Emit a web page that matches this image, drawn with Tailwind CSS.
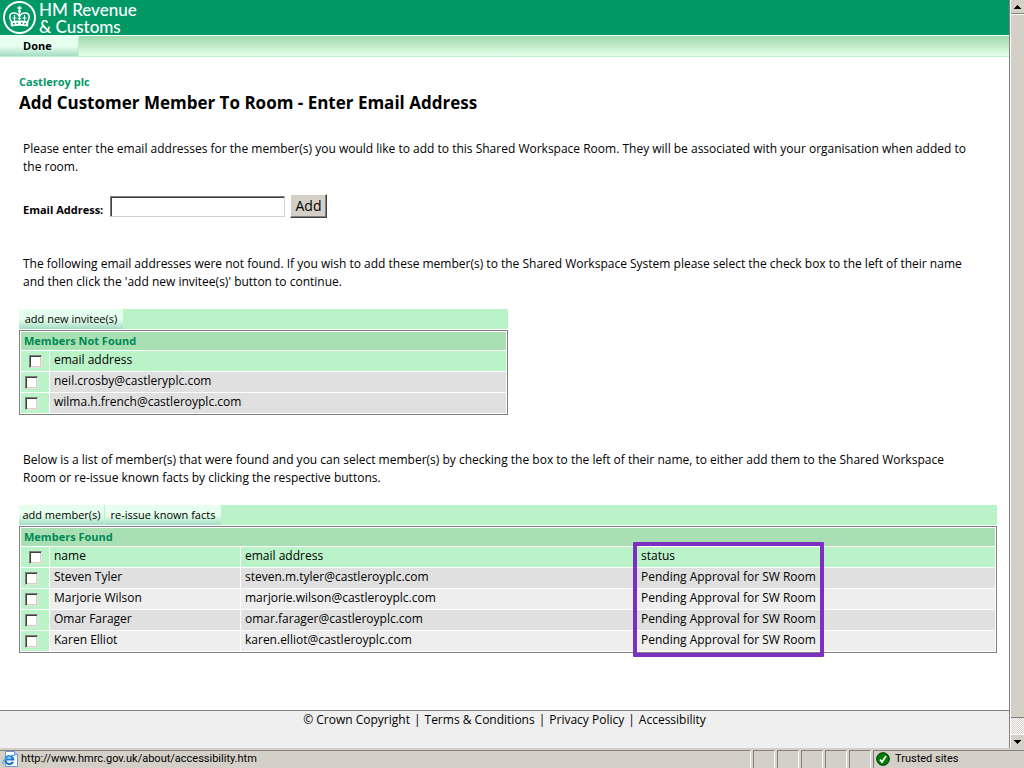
<!DOCTYPE html>
<html lang="en">
<head>
    <meta charset="UTF-8">
    <meta name="viewport" content="width=device-width, initial-scale=1.0">
    <script src="https://cdn.jsdelivr.net/npm/@tailwindcss/browser@4"></script>
    <title>Add Customer Member To Room</title>
</head>
<body class="flex flex-col h-screen bg-white text-black text-[12px] leading-[18px] font-['Open_Sans',sans-serif]">
    <div class="flex flex-1 min-h-0">
        <div class="flex flex-col flex-1 min-w-0 border-r border-[#808080]">
            <!-- Header -->
            <header class="flex items-center gap-[3px] h-[35px] pl-[3px] bg-[#009966] text-white shrink-0">
                <svg class="w-[33px] h-[33px]" viewBox="0 0 33 33" fill="none" stroke="#fff">
                    <circle cx="16.5" cy="16.5" r="15.5" stroke-width="1.9"/>
                    <path d="M16.500 5v5M14.300 7h4.400" stroke-width="1.5"/>
                    <circle cx="16.5" cy="10.5" r="1.4" fill="#fff" stroke="none"/>
                    <path d="M8.500 20.500C6 17.500 6 12 10.500 12C14 12 16 13.500 16.500 16C17 13.500 19 12 22.500 12C27 12 27 17.500 24.500 20.500" stroke-width="1.5"/>
                    <path d="M16.500 11v8.500M11.500 14v6M21.500 14v6" stroke-width="1.2"/>
                    <path d="M9.500 17h4M19.500 17h4M14.700 17.500h3.600" stroke-width="1.2"/>
                    <path d="M7.500 20.500Q16.500 18.500 25.500 20.500L25 25.500Q16.500 24 8 25.500Z" fill="#fff" stroke="none"/>
                    <path d="M10 22.800h1.700M13.500 22.300h1.500M18 22.300h1.500M21.300 22.800h1.700" stroke="#009966" stroke-width="1.4"/>
                </svg>
                <div class="text-[17px] leading-[17px] font-medium font-['Lato',sans-serif]">HM Revenue<br>&amp; Customs</div>
            </header>
            <nav class="flex h-[22px] border-t border-t-white border-b border-b-[#bbf3c9] bg-linear-to-b from-[#a0d8ac] to-[#e4ffea] shrink-0">
                <a href="#" class="w-[79px] pl-[23px] text-[11px] leading-[20px] font-bold border-r border-[#bbf3c9] bg-linear-to-b from-[#e6ffee] from-50% to-[#a4dcc4]">Done</a>
            </nav>

            <main class="flex-1 pl-[19px] pr-3 pt-4">
                <p class="text-[11px] text-[#009966] font-bold">Castleroy plc</p>
                <h1 class="text-[17px] leading-6 font-bold">Add Customer Member To Room - Enter Email Address</h1>

                <p class="mt-[25px] pl-1 pr-6">Please enter the email addresses for the member(s) you would like to add to this Shared Workspace Room. They will be associated with your organisation when added to the room.</p>

                <form class="flex items-start gap-[5px] mt-[18px] pl-1">
                    <label for="email" class="w-[82px] pt-[7px] text-[11px] font-bold whitespace-nowrap">Email Address:</label>
                    <input id="email" type="text" class="w-[175px] h-[21px] mt-[2px] px-1 bg-white border border-t-[#808080] border-l-[#808080] border-b-[#d4d0c8] border-r-[#d4d0c8] shadow-[inset_1px_1px_0_#404040]">
                    <button type="button" class="w-[37px] h-6 bg-[#d4d0c8] text-[14px] leading-5 border border-t-white border-l-white border-b-[#404040] border-r-[#404040] shadow-[inset_-1px_-1px_0_#808080]">Add</button>
                </form>

                <p class="mt-9 pl-1 pr-6">The following email addresses were not found. If you wish to add these member(s) to the Shared Workspace System please select the check box to the left of their name and then click the 'add new invitee(s)' button to continue.</p>

                <!-- Members not found -->
                <section class="w-1/2 mt-[18px]">
                    <div class="flex gap-px h-5 mb-px bg-[#bbf3c9] text-[11px]">
                        <button type="button" class="w-[104px] whitespace-nowrap bg-linear-to-b from-[#e6ffee] from-50% to-[#a4dcc4]">add new invitee(s)</button>
                    </div>
                    <table class="w-full table-fixed border-separate border-spacing-px border border-[#808080] text-left">
                        <colgroup><col class="w-7"><col></colgroup>
                        <thead>
                            <tr class="h-[18px] bg-[#a8e0b4]"><th colspan="2" class="px-[3px] text-[11px] text-[#008855] font-bold">Members Not Found</th></tr>
                            <tr class="h-5 bg-[#bbf3c9]">
                                <td class="pl-2"><input type="checkbox" aria-label="Select all" class="block appearance-none size-[13px] bg-white border border-t-[#808080] border-l-[#808080] border-b-[#e8e4dc] border-r-[#e8e4dc] shadow-[inset_1px_1px_0_#404040,inset_-1px_-1px_0_#d4d0c8]"></td>
                                <th class="pl-1 pb-[2px] font-normal">email address</th>
                            </tr>
                        </thead>
                        <tbody>
                            <tr class="h-5 bg-[#e0e0e0]">
                                <td class="pl-1 bg-[#bbf3c9]"><input type="checkbox" aria-label="neil.crosby" class="block appearance-none size-[13px] bg-white border border-t-[#808080] border-l-[#808080] border-b-[#e8e4dc] border-r-[#e8e4dc] shadow-[inset_1px_1px_0_#404040,inset_-1px_-1px_0_#d4d0c8]"></td>
                                <td class="pl-1 pb-[2px]">neil.crosby@castleryplc.com</td>
                            </tr>
                            <tr class="h-5 bg-[#e0e0e0]">
                                <td class="pl-1 bg-[#bbf3c9]"><input type="checkbox" aria-label="wilma.h.french" class="block appearance-none size-[13px] bg-white border border-t-[#808080] border-l-[#808080] border-b-[#e8e4dc] border-r-[#e8e4dc] shadow-[inset_1px_1px_0_#404040,inset_-1px_-1px_0_#d4d0c8]"></td>
                                <td class="pl-1 pb-[2px]">wilma.h.french@castleroyplc.com</td>
                            </tr>
                        </tbody>
                    </table>
                </section>

                <p class="mt-9 pl-1 pr-6">Below is a list of member(s) that were found and you can select member(s) by checking the box to the left of their name, to either add them to the Shared Workspace Room or re-issue known facts by clicking the respective buttons.</p>

                <!-- Members found -->
                <section class="mt-[18px]">
                    <div class="flex gap-px h-5 mb-px bg-[#bbf3c9] text-[11px]">
                        <button type="button" class="w-[85px] whitespace-nowrap bg-linear-to-b from-[#e6ffee] from-50% to-[#a4dcc4]">add member(s)</button>
                        <button type="button" class="w-[116px] whitespace-nowrap bg-linear-to-b from-[#e6ffee] from-50% to-[#a4dcc4]">re-issue known facts</button>
                    </div>
                    <div class="relative">
                        <table class="w-full table-fixed border-separate border-spacing-px border border-[#808080] text-left">
                            <colgroup><col class="w-7"><col class="w-[190px]"><col class="w-[395px]"><col></colgroup>
                            <thead>
                                <tr class="h-[18px] bg-[#a8e0b4]"><th colspan="4" class="px-[3px] text-[11px] text-[#008855] font-bold">Members Found</th></tr>
                                <tr class="h-5 bg-[#bbf3c9]">
                                    <td class="pl-2"><input type="checkbox" aria-label="Select all" class="block appearance-none size-[13px] bg-white border border-t-[#808080] border-l-[#808080] border-b-[#e8e4dc] border-r-[#e8e4dc] shadow-[inset_1px_1px_0_#404040,inset_-1px_-1px_0_#d4d0c8]"></td>
                                    <th class="pl-1 pb-[2px] font-normal">name</th>
                                    <th class="pl-1 pb-[2px] font-normal">email address</th>
                                    <th class="pl-1 pb-[2px] font-normal">status</th>
                                </tr>
                            </thead>
                            <tbody>
                                <tr class="h-5 bg-[#e0e0e0]">
                                    <td class="pl-1 bg-[#bbf3c9]"><input type="checkbox" aria-label="Steven Tyler" class="block appearance-none size-[13px] bg-white border border-t-[#808080] border-l-[#808080] border-b-[#e8e4dc] border-r-[#e8e4dc] shadow-[inset_1px_1px_0_#404040,inset_-1px_-1px_0_#d4d0c8]"></td>
                                    <td class="pl-1 pb-[2px]">Steven Tyler</td>
                                    <td class="pl-1 pb-[2px]">steven.m.tyler@castleroyplc.com</td>
                                    <td class="pl-1 pb-[2px]">Pending Approval for SW Room</td>
                                </tr>
                                <tr class="h-5 bg-[#eeeeee]">
                                    <td class="pl-1 bg-[#bbf3c9]"><input type="checkbox" aria-label="Marjorie Wilson" class="block appearance-none size-[13px] bg-white border border-t-[#808080] border-l-[#808080] border-b-[#e8e4dc] border-r-[#e8e4dc] shadow-[inset_1px_1px_0_#404040,inset_-1px_-1px_0_#d4d0c8]"></td>
                                    <td class="pl-1 pb-[2px]">Marjorie Wilson</td>
                                    <td class="pl-1 pb-[2px]">marjorie.wilson@castleroyplc.com</td>
                                    <td class="pl-1 pb-[2px]">Pending Approval for SW Room</td>
                                </tr>
                                <tr class="h-5 bg-[#e0e0e0]">
                                    <td class="pl-1 bg-[#bbf3c9]"><input type="checkbox" aria-label="Omar Farager" class="block appearance-none size-[13px] bg-white border border-t-[#808080] border-l-[#808080] border-b-[#e8e4dc] border-r-[#e8e4dc] shadow-[inset_1px_1px_0_#404040,inset_-1px_-1px_0_#d4d0c8]"></td>
                                    <td class="pl-1 pb-[2px]">Omar Farager</td>
                                    <td class="pl-1 pb-[2px]">omar.farager@castleroyplc.com</td>
                                    <td class="pl-1 pb-[2px]">Pending Approval for SW Room</td>
                                </tr>
                                <tr class="h-5 bg-[#eeeeee]">
                                    <td class="pl-1 bg-[#bbf3c9]"><input type="checkbox" aria-label="Karen Elliot" class="block appearance-none size-[13px] bg-white border border-t-[#808080] border-l-[#808080] border-b-[#e8e4dc] border-r-[#e8e4dc] shadow-[inset_1px_1px_0_#404040,inset_-1px_-1px_0_#d4d0c8]"></td>
                                    <td class="pl-1 pb-[2px]">Karen Elliot</td>
                                    <td class="pl-1 pb-[2px]">karen.elliot@castleroyplc.com</td>
                                    <td class="pl-1 pb-[2px]">Pending Approval for SW Room</td>
                                </tr>
                            </tbody>
                        </table>
                        <!-- highlight over the status column -->
                        <div class="absolute left-[614px] top-4 w-[191px] h-[115px] border-4 border-[#7c2fc0] rounded-[1px] pointer-events-none"></div>
                    </div>
                </section>
            </main>

            <footer class="flex justify-center gap-1 h-[38px] border-t border-[#808080] bg-[#efefef] shrink-0">
                <span>© Crown Copyright</span><span>|</span><a href="#">Terms &amp; Conditions</a><span>|</span><a href="#">Privacy Policy</a><span>|</span><a href="#">Accessibility</a>
            </footer>
        </div>

        <!-- Scrollbar -->
        <div class="flex flex-col w-[14px] bg-[#d4d0c8] border-l border-white shrink-0">
            <div class="flex items-center justify-center h-[14px] border-b border-[#808080] shrink-0">
                <svg class="w-[7px] h-1" viewBox="0 0 7 4" shape-rendering="crispEdges"><path d="M3 0h1v1h1v1h1v1h1v1H0V3h1V2h1V1h1z"/></svg>
            </div>
            <div class="flex-1 border-t border-t-white border-b border-b-[#808080]"></div>
            <div class="h-4 shrink-0 bg-[repeating-conic-gradient(#fff_0_25%,#d4d0c8_0_50%)] bg-size-[2px_2px]"></div>
            <div class="flex items-center justify-center h-[14px] border-t border-white shrink-0">
                <svg class="w-[7px] h-1" viewBox="0 0 7 4" shape-rendering="crispEdges"><path d="M0 0h7v1H6v1H5v1H4v1H3V3H2V2H1V1H0z"/></svg>
            </div>
        </div>
    </div>

    <!-- Status bar -->
    <div class="flex gap-[2px] h-5 pt-[2px] bg-[#d4d0c8] text-[11px] leading-4 font-['Roboto',sans-serif] shrink-0">
        <div class="flex items-start flex-1 gap-[3px] pl-[2px] border-t border-t-[#808080] border-r border-r-white">
            <svg class="w-4 h-4" viewBox="0 0 16 16">
                <path d="M3.500 .5h9l3 3v12h-12z" fill="#fff" stroke="#7a94d0"/>
                <path d="M12.500 .5v3h3" fill="#c8d8f0" stroke="#7a94d0"/>
                <path d="M11 10.700A4 4 0 1 1 11.300 8.500H4" fill="none" stroke="#1c78d0" stroke-width="2.200"/>
                <path d="M1 13.500C-.5 10 8 2.500 13 4.500" fill="none" stroke="#55b0ee" stroke-width="1.200"/>
            </svg>
            <span>http://www.hmrc.gov.uk/about/accessibility.htm</span>
        </div>
        <div class="w-[22px] border-t border-l border-t-[#808080] border-l-[#808080] border-r border-r-white"></div>
        <div class="w-[22px] border-t border-l border-t-[#808080] border-l-[#808080] border-r border-r-white"></div>
        <div class="w-[22px] border-t border-l border-t-[#808080] border-l-[#808080] border-r border-r-white"></div>
        <div class="w-[22px] border-t border-l border-t-[#808080] border-l-[#808080] border-r border-r-white"></div>
        <div class="w-[22px] border-t border-l border-t-[#808080] border-l-[#808080] border-r border-r-white"></div>
        <div class="flex items-start w-[151px] gap-[5px] pl-[2px] border-t border-l border-[#808080]">
            <svg class="w-[14px] h-[14px] mt-px" viewBox="0 0 14 14">
                <circle cx="7" cy="7" r="6.300" fill="#008000" stroke="#002800"/>
                <path d="M4 7.500l2 2.500 4-6" fill="none" stroke="#fff" stroke-width="1.800"/>
            </svg>
            <span>Trusted sites</span>
        </div>
    </div>
</body>
</html>
